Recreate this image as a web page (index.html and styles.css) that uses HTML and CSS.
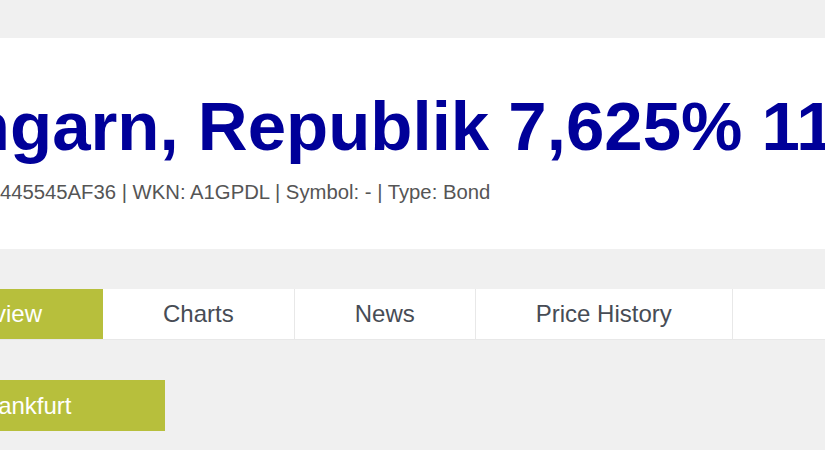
FILE: index.html
```html
<!DOCTYPE html>
<html lang="de">
<head>
<meta charset="utf-8">
<title>Ungarn, Republik 7,625% 11/41</title>
<link rel="stylesheet" href="styles.css">
</head>
<body>
<div class="page">
  <header class="instrument-header">
    <h1 class="instrument-title">Ungarn, Republik 7,625% 11/41</h1>
    <p class="instrument-meta">ISIN: US445545AF36 | WKN: A1GPDL | Symbol: - | Type: Bond</p>
  </header>
  <nav class="tabs">
    <a class="tab tab-active" href="#">Overview</a>
    <a class="tab" href="#">Charts</a>
    <a class="tab" href="#">News</a>
    <a class="tab" href="#">Price History</a>
  </nav>
  <div class="exchange-row">
    <a class="exchange-button" href="#">Frankfurt</a>
  </div>
</div>
</body>
</html>
```
FILE: styles.css
```css
html, body {
  margin: 0;
  padding: 0;
  overflow: hidden;
}
body {
  background: #f0f0f0;
  font-family: "Liberation Sans", Arial, sans-serif;
}
.page {
  margin-left: -118px;
  width: 1300px;
  padding-top: 38px;
}
.instrument-header {
  background: #ffffff;
  padding: 49px 0 45px 0;
}
.instrument-title {
  margin: 0;
  padding-left: 36px;
  font-size: 69px;
  line-height: 80px;
  font-weight: bold;
  color: #000099;
  white-space: nowrap;
}
.instrument-meta {
  margin: 13px 0 0 0;
  padding-left: 39px;
  font-size: 20.3px;
  line-height: 24px;
  color: #555555;
  white-space: nowrap;
}
.tabs {
  margin-top: 40px;
  display: flex;
  background: #ffffff;
  border-bottom: 1px solid #e8e8e8;
}
.tab {
  padding: 11px 60px;
  font-size: 24px;
  line-height: 28px;
  color: #474c55;
  text-decoration: none;
  border-right: 1px solid #e8e8e8;
  white-space: nowrap;
}
.tab-active {
  background: #b7bf3c;
  color: #ffffff;
  border-right-color: #b7bf3c;
}
.exchange-row {
  margin-top: 40px;
  display: flex;
}
.exchange-button {
  width: 283px;
  height: 51px;
  line-height: 51px;
  text-align: center;
  background: #b7bf3c;
  color: #ffffff;
  font-size: 24px;
  text-decoration: none;
}
```
